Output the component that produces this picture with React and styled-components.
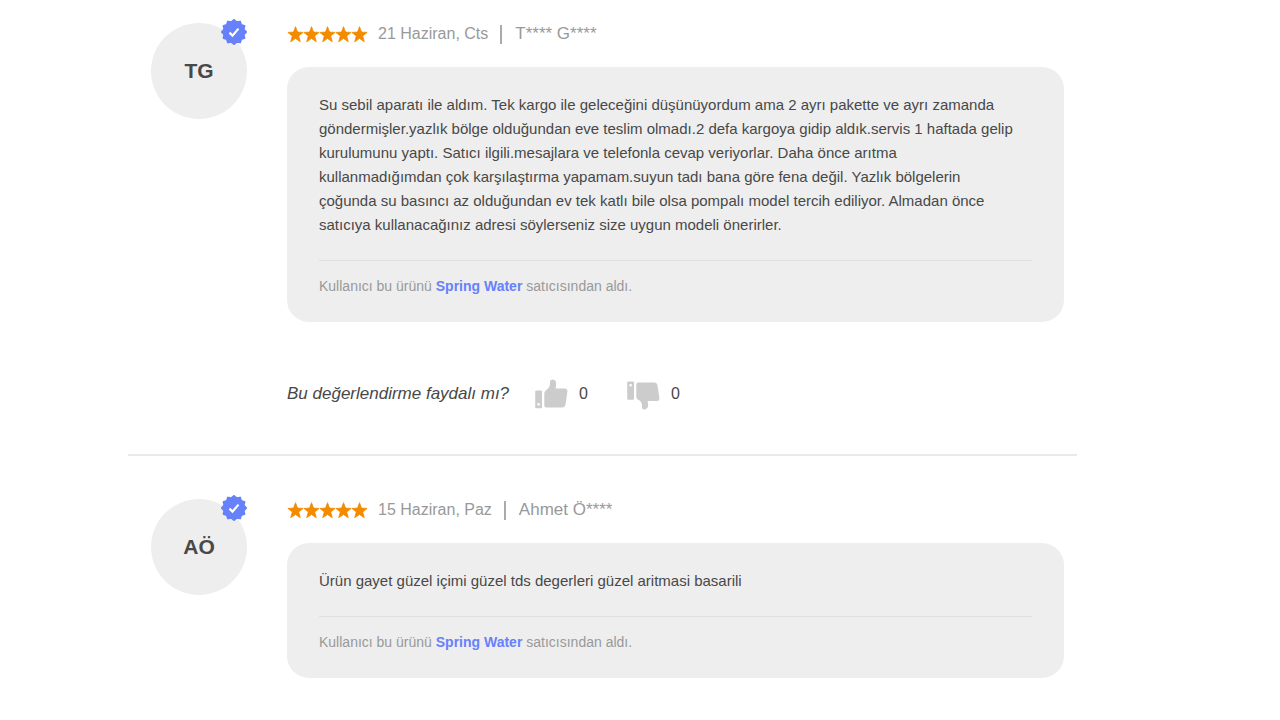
import React from 'react';
import styled, { createGlobalStyle } from 'styled-components';

const GlobalStyle = createGlobalStyle`
    body {
        margin: 0;
        background: #fff;
        color: #484848;
        font-family: "Liberation Sans", Arial, sans-serif;
    }
`;

const List = styled.main`
    padding: 0 203px 0 128px;
`;

const Review = styled.article`
    display: flex;
    align-items: flex-start;
    gap: 40px;
    padding: 23px 13px 42px 23px;

    & + & {
        border-top: 2px solid #e9e9e9;
        padding-top: 43px;
    }
`;

const Avatar = styled.div`
    position: relative;
    display: flex;
    flex: none;
    align-items: center;
    justify-content: center;
    width: 96px;
    height: 96px;
    border-radius: 50%;
    background: #eee;
    font-size: 21px;
    font-weight: 700;
`;

const Badge = styled.svg`
    position: absolute;
    top: -4px;
    right: 0;
    width: 26px;
    height: 26px;
`;

const Body = styled.div`
    flex: 1;
    min-width: 0;
`;

const Meta = styled.header`
    display: flex;
    align-items: center;
    height: 22px;
    margin-bottom: 22px;
    color: #999;
    font-size: 16px;
`;

const Stars = styled.svg`
    width: 81px;
    height: 18px;
    margin-right: 10px;
    fill: #f28b00;
    stroke: #f28b00;
    stroke-linejoin: round;
`;

const Separator = styled.span`
    width: 2px;
    height: 19px;
    margin: 0 13px 0 12px;
    background: #aaa;
`;

const Author = styled.span`
    font-size: 17px;
`;

const Card = styled.div`
    padding: 26px 32px 28px;
    border-radius: 22px;
    background: #eee;
`;

const Text = styled.p`
    max-width: 700px;
    margin: 0 0 23px;
    font-size: 15px;
    line-height: 24px;
`;

const Seller = styled.p`
    margin: 0;
    padding-top: 17px;
    border-top: 1px solid #e0e0e0;
    color: #999;
    font-size: 14px;
    line-height: 16px;
`;

const SellerLink = styled.a`
    color: #6681fa;
    font-weight: 700;
    text-decoration: none;
`;

const Helpful = styled.div`
    display: flex;
    align-items: center;
    height: 36px;
    margin-top: 54px;
`;

const Question = styled.em`
    margin-right: 26px;
    font-size: 17px;
`;

const Vote = styled.button`
    display: flex;
    align-items: center;
    gap: 11px;
    margin: 0 39px 0 0;
    padding: 0;
    border: 0;
    background: none;
    color: inherit;
    font: inherit;
    font-size: 16px;
    cursor: pointer;
`;

const Thumb = styled.svg`
    width: 33px;
    height: 32px;
    fill: #ccc;
`;

const reviews = [
    {
        initials: 'TG',
        date: '21 Haziran, Cts',
        author: 'T**** G****',
        text:
            'Su sebil aparatı ile aldım. Tek kargo ile geleceğini düşünüyordum ama 2 ayrı pakette ve ayrı zamanda göndermişler.yazlık bölge olduğundan eve teslim olmadı.2 defa kargoya gidip aldık.servis 1 haftada gelip kurulumunu yaptı. Satıcı ilgili.mesajlara ve telefonla cevap veriyorlar. Daha önce arıtma kullanmadığımdan çok karşılaştırma yapamam.suyun tadı bana göre fena değil. Yazlık bölgelerin çoğunda su basıncı az olduğundan ev tek katlı bile olsa pompalı model tercih ediliyor. Almadan önce satıcıya kullanacağınız adresi söylerseniz size uygun modeli önerirler.',
        seller: 'Spring Water',
        votes: { up: 0, down: 0 },
    },
    {
        initials: 'AÖ',
        date: '15 Haziran, Paz',
        author: 'Ahmet Ö****',
        text: 'Ürün gayet güzel içimi güzel tds degerleri güzel aritmasi basarili',
        seller: 'Spring Water',
    },
];

// 12 point seal outline
const seal = Array.from({ length: 24 }, (_, i) => {
    const r = i % 2 ? 10 : 12;
    const a = (i * Math.PI) / 12;
    return `${(13 + r * Math.sin(a)).toFixed(2)},${(13 - r * Math.cos(a)).toFixed(2)}`;
}).join(' ');

const VerifiedBadge = () => (
    <Badge viewBox="0 0 26 26" aria-hidden="true">
        <polygon points={seal} fill="#6681fa" stroke="#6681fa" strokeWidth="2" strokeLinejoin="round" />
        <path d="M8.5 13.600l3 3 6-7" fill="none" stroke="#fff" strokeWidth="2.2" />
    </Badge>
);

const Rating = ({ value }) => (
    <Stars viewBox="0 0 81 18" role="img" aria-label={`${value} / 5`}>
        {Array.from({ length: value }, (_, i) => (
            <path
                key={i}
                transform={`translate(${i * 16} 0)`}
                strokeWidth="0.8"
                d="M8.500 1.700l2 5.400 5.600.3-4.400 3.500 1.600 5.800-4.800-3.200-4.800 3.200 1.600-5.800L.9 7.400l5.600-.3z"
            />
        ))}
    </Stars>
);

const ThumbUp = () => (
    <Thumb viewBox="0 0 33 32" aria-hidden="true">
        <path
            fillRule="evenodd"
            d="M1.2 12.500h4.800q1 0 1 1v15.700q0 1-1 1H1.200q-1 0-1-1V13.500q0-1 1-1zM3.600 25a1.300 1.300 0 1 0 0 2.600a1.300 1.300 0 1 0 0-2.600z"
        />
        <path d="M9.300 15.500q0-2 1.500-3.100c2.400-1.700 4-3.500 4.200-6.400V4.300C15 2.300 16.300 1.300 17.900 1.600c2.200.4 3.300 2.100 3.300 4.400 0 1.600-.2 3-.7 4.400h9.300c1.800 0 2.900 1.400 2.600 3.200l-1.900 12.900c-.3 2-1.500 2.900-3.400 2.900H11.300q-2 0-2-2z" />
    </Thumb>
);

const ThumbDown = () => (
    <Thumb viewBox="0 0 33 32" aria-hidden="true">
        <path
            fillRule="evenodd"
            d="M1.200 3.500h4.800q1 0 1 1v16.200q0 1-1 1H1.200q-1 0-1-1V4.500q0-1 1-1zM3.600 6a1.300 1.300 0 1 0 0 2.600a1.300 1.300 0 1 0 0-2.600z"
        />
        <path d="M9.300 18.500q0 2 1.500 3.100c2.700 1.300 4 2.900 4.200 5.400v2c0 2 1.300 2.800 2.900 2.500 2.200-.4 3.300-2.100 3.300-4.400 0-1.400-.2-2.600-.7-4h9.300c1.800 0 2.900-1.400 2.600-3.200L30.500 7.500c-.3-2-1.500-2.900-3.400-2.900H11.300q-2 0-2 2z" />
    </Thumb>
);

const ReviewItem = ({ initials, date, author, text, seller, votes }) => (
    <Review>
        <Avatar>
            {initials}
            <VerifiedBadge />
        </Avatar>
        <Body>
            <Meta>
                <Rating value={5} />
                <time>{date}</time>
                <Separator />
                <Author>{author}</Author>
            </Meta>
            <Card>
                <Text>{text}</Text>
                <Seller>
                    Kullanıcı bu ürünü <SellerLink href="#seller">{seller}</SellerLink> satıcısından aldı.
                </Seller>
            </Card>
            {votes && (
                <Helpful>
                    <Question>Bu değerlendirme faydalı mı?</Question>
                    <Vote type="button" aria-label={`Faydalı: ${votes.up}`}>
                        <ThumbUp />
                        {votes.up}
                    </Vote>
                    <Vote type="button" aria-label={`Faydalı değil: ${votes.down}`}>
                        <ThumbDown />
                        {votes.down}
                    </Vote>
                </Helpful>
            )}
        </Body>
    </Review>
);

const App = () => (
    <>
        <GlobalStyle />
        <List>
            {reviews.map(review => (
                <ReviewItem key={review.initials} {...review} />
            ))}
        </List>
    </>
);

export default App;
